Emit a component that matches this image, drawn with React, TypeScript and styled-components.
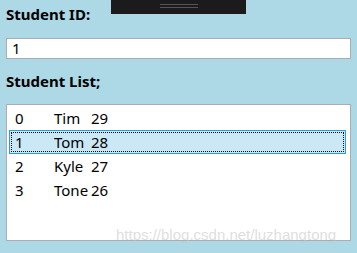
import React from "react";
import styled, { createGlobalStyle } from "styled-components";

const Global = createGlobalStyle`
  html, body { margin: 0; padding: 0; background: #add8e6; }
  body { font-family: "Noto Sans", "Liberation Sans", sans-serif; }
`;

const Page = styled.div`
  position: relative;
  width: 357px;
  height: 253px;
  background: #add8e6;
  padding: 4px 6px 0 6px;
  box-sizing: border-box;
  display: flex;
  flex-direction: column;
  overflow: hidden;
`;

const Label = styled.div<{ $gap: number }>`
  font-size: 15px;
  font-weight: 700;
  line-height: 20px;
  color: #000;
  margin-bottom: ${(p) => p.$gap}px;
`;

const TextBox = styled.div`
  width: 345px;
  height: 21px;
  box-sizing: border-box;
  border: 1px solid #abadb3;
  background: #fff;
  font-size: 15px;
  line-height: 19px;
  padding-left: 5px;
  color: #000;
  margin-bottom: 12px;
`;

const ListBox = styled.div`
  width: 345px;
  height: 137px;
  box-sizing: border-box;
  border: 1px solid #abadb3;
  background: #fff;
  padding: 1px 4px 0 2px;
  display: flex;
  flex-direction: column;
`;

const Row = styled.div<{ $selected?: boolean }>`
  position: relative;
  height: 24px;
  box-sizing: border-box;
  border: 1px solid ${(p) => (p.$selected ? "#26a0da" : "transparent")};
  background: ${(p) => (p.$selected ? "#cbe8f6" : "transparent")};
  display: grid;
  grid-template-columns: 39px 37px auto;
  align-items: center;
  padding-left: 5px;
  font-size: 15px;
  line-height: 22px;
  color: #000;
  &::after {
    content: "";
    display: ${(p) => (p.$selected ? "block" : "none")};
    position: absolute;
    inset: 1px;
    border: 1px dotted #000;
  }
`;

const Cell = styled.span`
  white-space: nowrap;
`;

const DebugBar = styled.div`
  position: absolute;
  left: 111px;
  top: 0;
  width: 135px;
  height: 14px;
  background: #1b1b1b;
`;

const Grip = styled.div`
  position: absolute;
  left: 49px;
  top: 4px;
  width: 38px;
  height: 4px;
  border-top: 1px solid #555;
  border-bottom: 1px solid #555;
  box-sizing: border-box;
`;

const Watermark = styled.div`
  position: absolute;
  left: 116px;
  top: 226px;
  font-family: "Liberation Sans", Arial, sans-serif;
  font-size: 15px;
  line-height: 18px;
  color: rgba(200, 200, 200, 0.6);
  white-space: nowrap;
`;

const students = [
  { id: 0, name: "Tim", age: 29 },
  { id: 1, name: "Tom", age: 28 },
  { id: 2, name: "Kyle", age: 27 },
  { id: 3, name: "Tone", age: 26 },
];

export default function App() {
  return (
    <Page>
      <Global />
      <Label $gap={14}>Student ID:</Label>
      <TextBox>1</TextBox>
      <Label $gap={13}>Student List;</Label>
      <ListBox>
        {students.map((s) => (
          <Row key={s.id} $selected={s.id === 1}>
            <Cell>{s.id}</Cell>
            <Cell>{s.name}</Cell>
            <Cell>{s.age}</Cell>
          </Row>
        ))}
      </ListBox>
      <DebugBar>
        <Grip />
      </DebugBar>
      <Watermark>https://blog.csdn.net/luzhangtong</Watermark>
    </Page>
  );
}
